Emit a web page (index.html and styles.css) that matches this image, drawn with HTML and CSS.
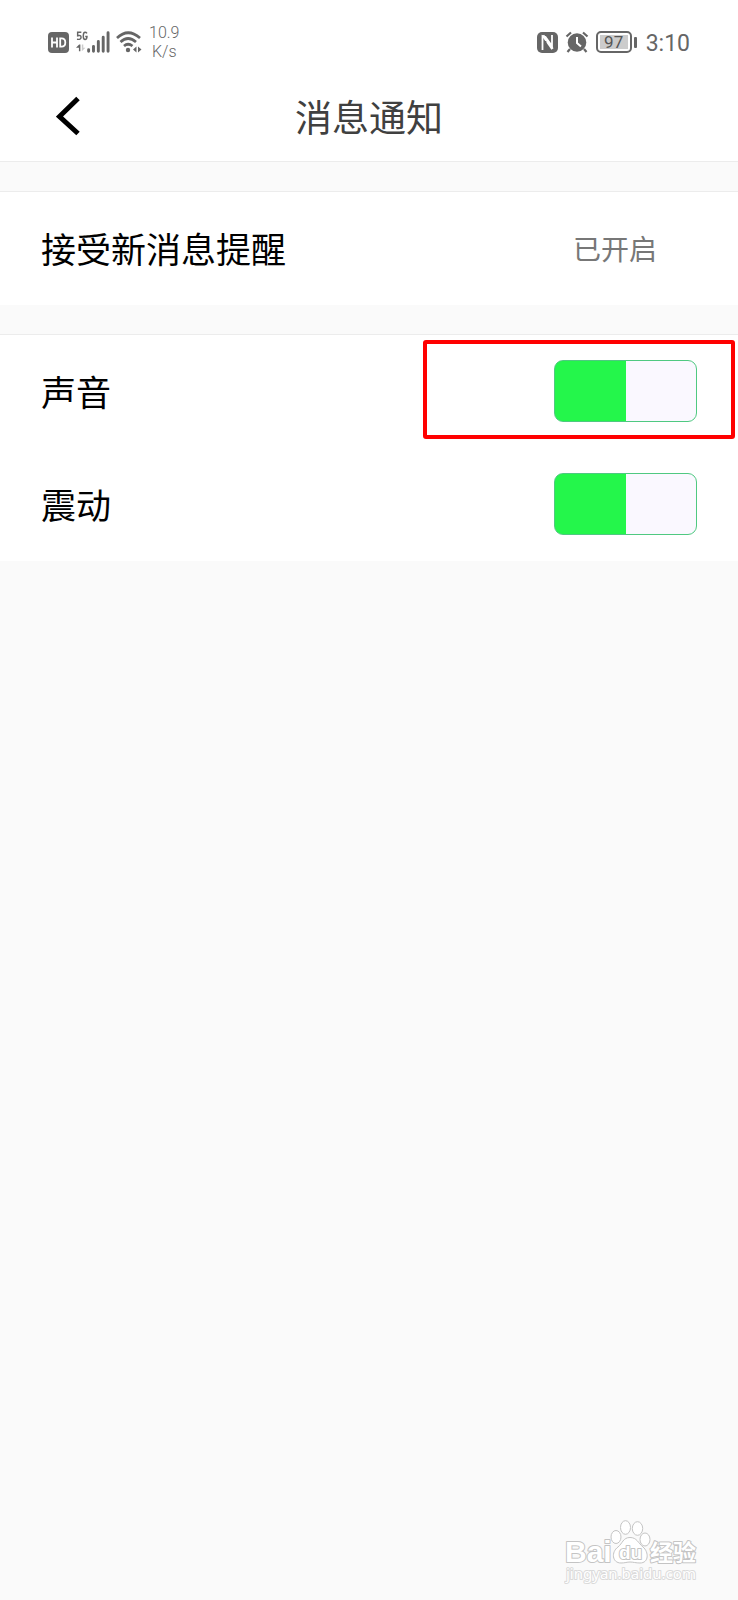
FILE: index.html
```html
<!DOCTYPE html>
<html lang="zh-CN">
<head>
<meta charset="utf-8">
<meta name="viewport" content="width=device-width, initial-scale=1">
<title>消息通知</title>
<link rel="stylesheet" href="styles.css">
</head>
<body>
<div class="status-bar">
  <div class="status-left">
    <svg class="icon" width="21" height="21" viewBox="0 0 21 21" aria-label="HD">
      <rect width="21" height="21" rx="4" fill="#666"/>
      <path d="M4 5.500v10M9 5.500v10M4 10.500h5M12.200 6.400v8.200h1.300q3.800 0 3.800-4.100t-3.800-4.100z" fill="none" stroke="#fff" stroke-width="1.800"/>
    </svg>
    <svg class="icon signal" width="34" height="24" viewBox="0 0 35 24" aria-label="5G">
      <path d="M5.500 2H1.700v3.600q3.500-1 3.500 1.600T1 9.200M11.300 3.200Q10.500 2 9.300 2 7.500 2 7.500 5.700t1.800 3.700q2 0 2-3H9.500" fill="none" stroke="#666" stroke-width="1.500"/>
      <path d="M0 18l3.200-3.500h1.300v7H3V18z" fill="#666"/>
      <path d="M6 14.500h1.500V18h2.200L6 21.500z" fill="#ccc"/>
      <path d="M13 20v1.500M18 16.500v5M23 11.500v10M28 7v14.500M33 2.500v19" stroke="#666" stroke-width="3" stroke-linecap="round" fill="none"/>
    </svg>
    <svg class="icon wifi" width="26" height="24" viewBox="0 0 26 24" aria-label="Wi-Fi">
      <path d="M1 8q11-10.500 23 0M4.500 12q7.500-7 15.500 0M8 16q4-3.500 8.500 0" fill="none" stroke="#666" stroke-width="2.700"/>
      <circle cx="12" cy="20" r="2.200" fill="#666"/>
      <path d="M20.500 16.500v6l-3.500-3zM22 16.500v6l3.500-3z" fill="#666"/>
    </svg>
    <div class="speed"><span>10.9</span><span>K/s</span></div>
  </div>
  <div class="status-right">
    <svg class="icon" width="21" height="21" viewBox="0 0 21 21" aria-label="NFC">
      <rect width="21" height="21" rx="5" fill="#666"/>
      <path d="M5.500 18V4l3 1 6.500 9V3" fill="none" stroke="#fff" stroke-width="1.800"/>
      <path d="M6 3.500l9.500 13.500" stroke="#fff" stroke-width="2.600"/>
      <path d="M8.300 9v10" stroke="#666" stroke-width="2"/>
    </svg>
    <svg class="icon alarm" width="24" height="22" viewBox="0 0 24 22" aria-label="闹钟">
      <circle cx="12" cy="11.500" r="9.300" fill="#666"/>
      <path d="M1.500 5.500L6 1.500M22.500 5.500L18 1.500M5 18l-2.500 3M19 18l2.500 3" stroke="#666" stroke-width="2.200"/>
      <path d="M12 6v6l4 3.500" fill="none" stroke="#fff" stroke-width="2"/>
    </svg>
    <div class="battery"><span class="battery-level">97</span></div>
    <span class="clock">3:10</span>
  </div>
</div>
<header class="header">
  <button class="back" type="button" aria-label="返回">
    <svg width="24" height="40" viewBox="0 0 24 40"><path d="M22 2.500L3.500 20.500 22 37.500" fill="none" stroke="#000" stroke-width="5"/></svg>
  </button>
  <h1 class="title">消息通知</h1>
</header>
<main class="settings">
  <section class="group">
    <div class="row"><span>接受新消息提醒</span><span class="state">已开启</span></div>
  </section>
  <section class="group">
    <div class="row">
      <label for="sound">声音</label>
      <input class="toggle" id="sound" type="checkbox" checked>
      <div class="highlight"></div>
    </div>
    <div class="row">
      <label for="vibrate">震动</label>
      <input class="toggle" id="vibrate" type="checkbox" checked>
    </div>
  </section>
</main>
<svg class="watermark" width="136" height="68" viewBox="0 0 136 68" aria-label="Baidu 经验">
  <g fill="#fff" stroke="#c4c4c4" stroke-width="1">
    <ellipse cx="52" cy="17" rx="5" ry="6.500"/>
    <ellipse cx="61.500" cy="7.500" rx="5" ry="6.800"/>
    <ellipse cx="73.500" cy="8.500" rx="5.200" ry="6.800"/>
    <ellipse cx="81" cy="19.500" rx="5" ry="6.500"/>
    <path d="M66 17.500c-7 0-7.500 6-12 9.500-7 5-6 16 3 16 4 0 6-1 9-1s6 1 10 1c9 0 9-11 3-16-5-4-6-9.500-13-9.500z"/>
  </g>
  <text class="mark mark-latin" x="1" y="42">Bai</text>
  <text class="mark mark-du" x="55" y="39">du</text>
  <text class="mark mark-cjk" x="86" y="41">经验</text>
  <text class="mark mark-url" x="2" y="59">jingyan.baidu.com</text>
</svg>
</body>
</html>
```
FILE: styles.css
```css
* { box-sizing: border-box; }
body {
  margin: 0;
  min-height: 100vh;
  background: #fafafa;
  color: #000;
  font-family: Roboto, "Noto Sans CJK SC", sans-serif;
}
.status-bar {
  display: flex;
  justify-content: space-between;
  height: 80px;
  padding: 4px 48px 0;
  background: #fff;
  color: #666;
}
.status-left, .status-right { display: flex; align-items: center; }
.icon { display: block; flex: none; }
.signal { margin-left: 7px; }
.wifi { margin-left: 6px; }
.speed {
  display: flex;
  flex-direction: column;
  align-items: center;
  margin-left: 7px;
  font-size: 16px;
  font-weight: 300;
  line-height: 19px;
}
.alarm { margin: 0 7px; }
.battery {
  position: relative;
  width: 36px;
  height: 22px;
  padding: 2px;
  border: 2px solid #666;
  border-radius: 5px;
}
.battery::after {
  content: "";
  position: absolute;
  top: 4px;
  right: -7px;
  width: 3px;
  height: 11px;
  border-radius: 1px;
  background: #666;
}
.battery-level {
  display: block;
  background: #ccc;
  color: #555;
  font-size: 17px;
  line-height: 14px;
  text-align: center;
}
.clock { margin-left: 14px; padding-top: 2px; font-size: 23px; }
.header {
  display: grid;
  grid-template-columns: 56px 1fr 56px;
  align-items: center;
  height: 82px;
  padding: 0 24px 9px;
  border-bottom: 1px solid #ececec;
  background: #fff;
}
.back {
  display: flex;
  justify-content: flex-end;
  padding: 0;
  border: 0;
  background: none;
}
.title {
  margin: 0;
  padding-top: 8px;
  color: #404040;
  font-size: 37px;
  font-weight: 400;
  line-height: 48px;
  text-align: center;
}
.settings {
  display: flex;
  flex-direction: column;
  gap: 29px;
  padding-top: 29px;
}
.group {
  border-top: 1px solid #ececec;
  background: #fff;
}
.row {
  position: relative;
  display: flex;
  align-items: center;
  justify-content: space-between;
  height: 113px;
  padding: 0 41px 2px;
  font-size: 35px;
}
.state { margin-right: 40px; color: #777; font-size: 28px; }
.toggle {
  appearance: none;
  width: 143px;
  height: 62px;
  margin: 0;
  border: 1px solid #4fc981;
  border-radius: 9px;
  background: #faf8ff;
}
.toggle:checked { background: linear-gradient(90deg, #24f64b 50%, #faf8ff 50%); }
.highlight {
  position: absolute;
  top: 5px;
  right: 3px;
  width: 312px;
  height: 99px;
  border: 4px solid #f00;
  border-radius: 3px;
  pointer-events: none;
}
.watermark { position: absolute; right: 38px; bottom: 12px; }
.mark {
  fill: #fff;
  stroke: #c4c4c4;
  stroke-width: 2px;
  stroke-linejoin: round;
  paint-order: stroke;
}
.mark-latin { font: 700 30px "Liberation Sans", sans-serif; }
.mark-du { font: 700 19px "Liberation Sans", sans-serif; }
.mark-cjk { font: 700 23px "Noto Sans CJK SC", sans-serif; }
.mark-url { font: 15px "Noto Sans", sans-serif; stroke: #dadada; }
```
